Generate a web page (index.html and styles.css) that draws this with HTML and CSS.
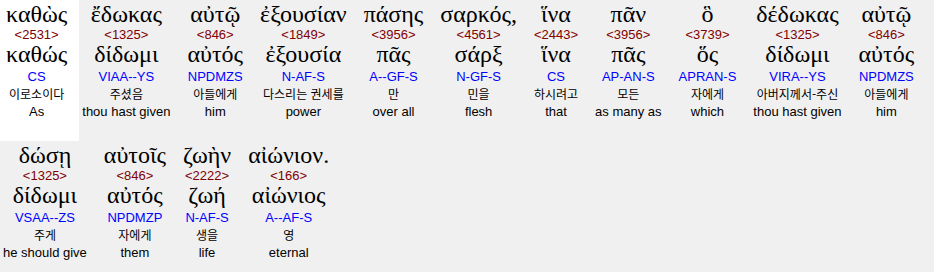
FILE: index.html
```html
<!DOCTYPE html>
<html lang="ko">
<head>
<meta charset="utf-8">
<title>Interlinear</title>
<link rel="stylesheet" href="styles.css">
</head>
<body>
<div class="verse">
  <div class="word current"><div class="gk">καθὼς</div><div class="num">&lt;2531&gt;</div><div class="lem">καθώς</div><div class="morph">CS</div><div class="ko">이로소이다</div><div class="en">As</div></div>
  <div class="word"><div class="gk">ἔδωκας</div><div class="num">&lt;1325&gt;</div><div class="lem">δίδωμι</div><div class="morph">VIAA--YS</div><div class="ko">주셨음</div><div class="en">thou hast given</div></div>
  <div class="word"><div class="gk">αὐτῷ</div><div class="num">&lt;846&gt;</div><div class="lem">αὐτός</div><div class="morph">NPDMZS</div><div class="ko">아들에게</div><div class="en">him</div></div>
  <div class="word"><div class="gk">ἐξουσίαν</div><div class="num">&lt;1849&gt;</div><div class="lem">ἐξουσία</div><div class="morph">N-AF-S</div><div class="ko">다스리는 권세를</div><div class="en">power</div></div>
  <div class="word"><div class="gk">πάσης</div><div class="num">&lt;3956&gt;</div><div class="lem">πᾶς</div><div class="morph">A--GF-S</div><div class="ko">만</div><div class="en">over all</div></div>
  <div class="word"><div class="gk">σαρκός,</div><div class="num">&lt;4561&gt;</div><div class="lem">σάρξ</div><div class="morph">N-GF-S</div><div class="ko">민을</div><div class="en">flesh</div></div>
  <div class="word"><div class="gk">ἵνα</div><div class="num">&lt;2443&gt;</div><div class="lem">ἵνα</div><div class="morph">CS</div><div class="ko">하시려고</div><div class="en">that</div></div>
  <div class="word"><div class="gk">πᾶν</div><div class="num">&lt;3956&gt;</div><div class="lem">πᾶς</div><div class="morph">AP-AN-S</div><div class="ko">모든</div><div class="en">as many as</div></div>
  <div class="word"><div class="gk">ὃ</div><div class="num">&lt;3739&gt;</div><div class="lem">ὅς</div><div class="morph">APRAN-S</div><div class="ko">자에게</div><div class="en">which</div></div>
  <div class="word"><div class="gk">δέδωκας</div><div class="num">&lt;1325&gt;</div><div class="lem">δίδωμι</div><div class="morph">VIRA--YS</div><div class="ko">아버지께서-주신</div><div class="en">thou hast given</div></div>
  <div class="word"><div class="gk">αὐτῷ</div><div class="num">&lt;846&gt;</div><div class="lem">αὐτός</div><div class="morph">NPDMZS</div><div class="ko">아들에게</div><div class="en">him</div></div>
  <div class="word"><div class="gk">δώσῃ</div><div class="num">&lt;1325&gt;</div><div class="lem">δίδωμι</div><div class="morph">VSAA--ZS</div><div class="ko">주게</div><div class="en">he should give</div></div>
  <div class="word"><div class="gk">αὐτοῖς</div><div class="num">&lt;846&gt;</div><div class="lem">αὐτός</div><div class="morph">NPDMZP</div><div class="ko">자에게</div><div class="en">them</div></div>
  <div class="word"><div class="gk">ζωὴν</div><div class="num">&lt;2222&gt;</div><div class="lem">ζωή</div><div class="morph">N-AF-S</div><div class="ko">생을</div><div class="en">life</div></div>
  <div class="word"><div class="gk">αἰώνιον.</div><div class="num">&lt;166&gt;</div><div class="lem">αἰώνιος</div><div class="morph">A--AF-S</div><div class="ko">영</div><div class="en">eternal</div></div>
</div>
</body>
</html>
```
FILE: styles.css
```css
html, body {
  margin: 0;
  padding: 0;
  background: #f0f0f0;
  overflow: hidden;
}
.verse {
  display: flex;
  flex-wrap: wrap;
  align-items: flex-start;
}
.word {
  box-sizing: border-box;
  height: 141px;
  padding: 2px 14px 0 3px;
  text-align: center;
  white-space: nowrap;
  color: #000;
}
.word.current {
  background: #ffffff;
  padding-left: 6px;
  padding-right: 12px;
}
.gk, .lem {
  font-family: "Liberation Serif", "DejaVu Serif", serif;
  font-size: 24px;
  line-height: 25px;
}
.num {
  font-family: "Liberation Sans", Arial, sans-serif;
  font-size: 13px;
  line-height: 15px;
  color: #800000;
}
.morph {
  font-family: "Liberation Sans", Arial, sans-serif;
  font-size: 13px;
  line-height: 19px;
  color: #0000ff;
}
.ko {
  font-family: "Noto Sans CJK KR", sans-serif;
  font-size: 12px;
  line-height: 16px;
}
.en {
  font-family: "Liberation Sans", Arial, sans-serif;
  font-size: 13px;
  line-height: 19px;
}
```
